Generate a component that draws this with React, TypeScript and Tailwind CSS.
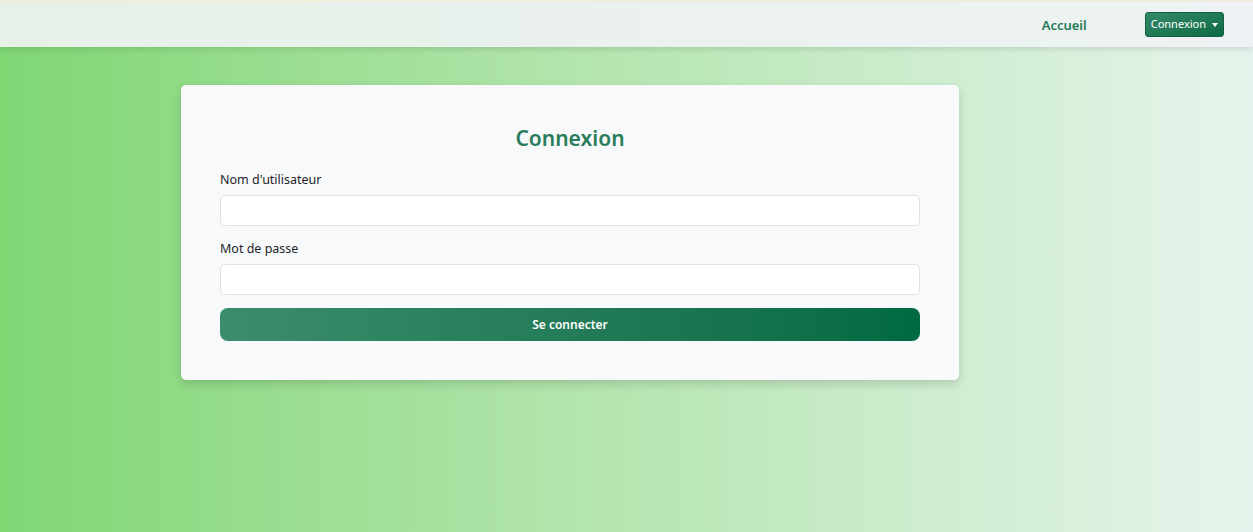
const Navbar = () => {
  return (
    <nav className="h-[47px] border-t-2 border-[#efeedd] bg-gradient-to-r from-[#e7f1e8] to-[#eef2f4] shadow-[0_2px_6px_rgba(0,0,0,0.12)] flex items-center justify-end pr-[29px] relative z-10">
      <a className="text-[13px] font-semibold text-[#267a57] mr-[58px] mt-[2px] cursor-pointer">Accueil</a>
      <button className="h-[25px] px-[5px] rounded-[3px] bg-gradient-to-br from-[#338a68] to-[#0a6a45] text-white text-[11px] flex items-center gap-[6px] border border-[#11603f]">
        Connexion
        <span className="w-0 h-0 border-l-[3px] border-r-[3px] border-t-[4px] border-l-transparent border-r-transparent border-t-white" />
      </button>
    </nav>
  );
};

const Field = ({ label, type }: { label: string; type: string }) => (
  <div className="mb-[14px] last-of-type:mb-[13px]">
    <label className="block text-[12.5px] text-[#212529] mb-[6px] leading-[18px]">{label}</label>
    <input
      type={type}
      className="w-full h-[31px] rounded-[5px] border border-[#dee2e6] bg-white px-3 text-sm outline-none"
    />
  </div>
);

const App = () => {
  return (
    <div
      className="min-h-[532px] bg-gradient-to-r from-[#7fd673] via-[#b7e6b2] to-[#e6f4ed]"
      style={{ fontFamily: '"Noto Sans", "Open Sans", sans-serif' }}
    >
      <Navbar />
      <div className="flex">
        <div className="ml-[181px] mt-[38px] w-[778px] bg-[#f8f9fa] rounded-[5px] shadow-[0_4px_10px_rgba(0,0,0,0.15)] px-[39px] pt-[37px] pb-[39px]">
          <h2 className="text-center text-[21px] font-semibold text-[#2a7d5c] mb-[17px] leading-[32px]">Connexion</h2>
          <Field label="Nom d'utilisateur" type="text" />
          <Field label="Mot de passe" type="password" />
          <button className="w-full h-[33px] rounded-[8px] bg-gradient-to-r from-[#3a8d6d] to-[#006a42] text-white text-[12px] font-semibold">
            Se connecter
          </button>
        </div>
      </div>
    </div>
  );
};

export default App;
